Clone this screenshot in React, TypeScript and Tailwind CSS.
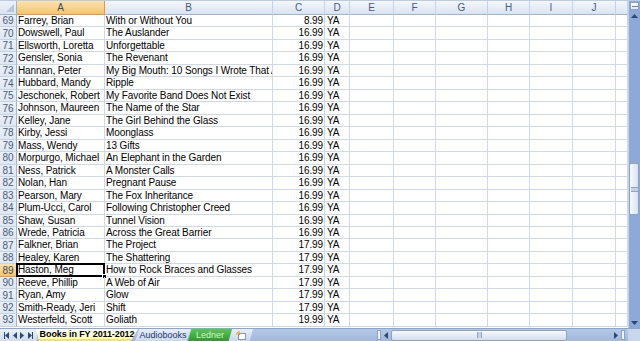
import React from "react";

const rows: [number, string, string, string][] = [
  [69, "Farrey, Brian", "With or Without You", "8.99"],
  [70, "Dowswell, Paul", "The Auslander", "16.99"],
  [71, "Ellsworth, Loretta", "Unforgettable", "16.99"],
  [72, "Gensler, Sonia", "The Revenant", "16.99"],
  [73, "Hannan, Peter", "My Big Mouth: 10 Songs I Wrote That Almost Got Me Expelled", "16.99"],
  [74, "Hubbard, Mandy", "Ripple", "16.99"],
  [75, "Jeschonek, Robert", "My Favorite Band Does Not Exist", "16.99"],
  [76, "Johnson, Maureen", "The Name of the Star", "16.99"],
  [77, "Kelley, Jane", "The Girl Behind the Glass", "16.99"],
  [78, "Kirby, Jessi", "Moonglass", "16.99"],
  [79, "Mass, Wendy", "13 Gifts", "16.99"],
  [80, "Morpurgo, Michael", "An Elephant in the Garden", "16.99"],
  [81, "Ness, Patrick", "A Monster Calls", "16.99"],
  [82, "Nolan, Han", "Pregnant Pause", "16.99"],
  [83, "Pearson, Mary", "The Fox Inheritance", "16.99"],
  [84, "Plum-Ucci, Carol", "Following Christopher Creed", "16.99"],
  [85, "Shaw, Susan", "Tunnel Vision", "16.99"],
  [86, "Wrede, Patricia", "Across the Great Barrier", "16.99"],
  [87, "Falkner, Brian", "The Project", "17.99"],
  [88, "Healey, Karen", "The Shattering", "17.99"],
  [89, "Haston, Meg", "How to Rock Braces and Glasses", "17.99"],
  [90, "Reeve, Phillip", "A Web of Air", "17.99"],
  [91, "Ryan, Amy", "Glow", "17.99"],
  [92, "Smith-Ready, Jeri", "Shift", "17.99"],
  [93, "Westerfeld, Scott", "Goliath", "19.99"],
];

const letters = ["A", "B", "C", "D", "E", "F", "G", "H", "I", "J", ""];

const cell =
  "border-r border-b border-[#d0d7e5] overflow-hidden whitespace-nowrap text-[10px] leading-[11.5px] tracking-[-0.1px] text-black";

function Tri({ dir, className = "" }: { dir: "up" | "down" | "left" | "right"; className?: string }) {
  const pts =
    dir === "up"
      ? "0,4 3.5,0 7,4"
      : dir === "down"
      ? "0,0 3.5,4 7,0"
      : dir === "left"
      ? "4,0 0,3.5 4,7"
      : "0,0 4,3.5 0,7";
  const w = dir === "up" || dir === "down" ? 7 : 4;
  const h = dir === "up" || dir === "down" ? 4 : 7;
  return (
    <svg width={w} height={h} viewBox={`0 0 ${w} ${h}`} className={className}>
      <polygon points={pts} fill="#2d4773" />
    </svg>
  );
}

export default function App() {
  return (
    <div
      className="w-[640px] h-[341px] overflow-hidden flex flex-col bg-white"
      style={{ fontFamily: '"Liberation Sans", Arial, sans-serif' }}
    >
      <div className="flex h-[328px] border-t border-[#b9cce6]">
        {/* grid */}
        <div className="grid grid-cols-[17px_88px_168px_52px_25px_44px_42px_52px_42px_43px_43px_12px] grid-rows-[14px_repeat(25,12.48px)] flex-1 overflow-hidden">
          {/* corner */}
          <div className="relative border-r border-b border-[#9eb6ce] bg-gradient-to-b from-[#eef3fa] to-[#d9e3f1]">
            <div className="absolute right-[2px] bottom-[2px] w-0 h-0 border-l-[8px] border-l-transparent border-b-[8px] border-b-[#b7c6da]" />
          </div>
          {letters.map((l, i) => (
            <div
              key={"h" + i}
              className={
                i === 0
                  ? "flex items-center justify-center border-r border-b border-[#f29536] bg-gradient-to-b from-[#fae2b2] to-[#f4c66c] text-[10px] text-[#3b4a63]"
                  : "flex items-center justify-center border-r border-b border-r-[#c5d3e6] border-b-[#9eb6ce] bg-gradient-to-b from-[#f4f7fc] to-[#d9e3f0] text-[10px] text-[#4a5b78]"
              }
            >
              {l}
            </div>
          ))}
          {rows.map(([n, a, b, c]) => {
            const sel = n === 89;
            return (
              <React.Fragment key={n}>
                <div
                  className={
                    sel
                      ? "flex items-center justify-center border-r border-b border-r-[#f29536] border-b-[#f29536] bg-gradient-to-b from-[#fae2b2] to-[#f4c66c] text-[10px] leading-[11px] text-[#3b4a63]"
                      : "flex items-center justify-center border-r border-b border-r-[#9eb6ce] border-b-[#c5d3e6] bg-gradient-to-b from-[#eaf0f8] to-[#dfe7f3] text-[10px] leading-[11px] text-[#4a5b78]"
                  }
                >
                  {n}
                </div>
                <div className={cell + " relative pl-[1px] overflow-visible"}>
                  <span className="block overflow-hidden">{a}</span>
                  {sel && (
                    <>
                      <div className="absolute left-[-1px] top-[-1px] right-[-1px] bottom-[-1px] border-2 border-black pointer-events-none" />
                      <div className="absolute right-[-3px] bottom-[-3px] w-[5px] h-[5px] bg-black border border-white" />
                    </>
                  )}
                </div>
                <div className={cell + " pl-[1px]"}>{b}</div>
                <div className={cell + " text-right pr-[1px]"}>{c}</div>
                <div className={cell + " pl-[2px]"}>YA</div>
                <div className={cell} />
                <div className={cell} />
                <div className={cell} />
                <div className={cell} />
                <div className={cell} />
                <div className={cell} />
                <div className={cell} />
              </React.Fragment>
            );
          })}
        </div>
        {/* vertical scrollbar */}
        <div className="w-[12px] flex flex-col bg-[#8ea9d6] border-l border-[#c2d3ec]">
          <div className="h-[8px] mx-[1px] mt-[1px] bg-gradient-to-b from-white to-[#dfe8f5] border border-[#8ea3c3] flex items-center justify-center">
            <div className="w-[6px] h-[1px] bg-[#6f85a8]" />
          </div>
          <div className="h-[11px] flex items-center justify-center">
            <Tri dir="up" />
          </div>
          <div className="flex-1 relative">
            <div className="absolute left-0 right-[1px] top-[142px] h-[52px] rounded-[2px] border border-[#8fa3c1] bg-gradient-to-r from-[#f6f9fd] to-[#d8e2ef] flex flex-col items-center justify-center">
              <div className="w-[7px] h-[5px] border-y border-[#8fa3c1] bg-[#c6d2e3]" />
            </div>
          </div>
          <div className="h-[11px] flex items-center justify-center">
            <Tri dir="down" />
          </div>
        </div>
      </div>
      {/* tab bar */}
      <div className="h-[13px] flex items-stretch bg-gradient-to-b from-[#b5c9e6] to-[#9fb8dd] border-t border-[#8aa6d0] text-[9px] leading-[12px] whitespace-nowrap">
        <div className="w-[37px] shrink-0 flex items-center justify-around px-[2px] bg-gradient-to-b from-[#eaf0f9] to-[#cfdcee]">
          <span className="flex items-center"><span className="w-[1px] h-[7px] bg-[#2d4773]" /><Tri dir="left" /></span>
          <Tri dir="left" />
          <Tri dir="right" />
          <span className="flex items-center"><Tri dir="right" /><span className="w-[1px] h-[7px] bg-[#2d4773]" /></span>
        </div>
        <div className="relative w-[102px] shrink-0 -ml-[1px] flex items-center justify-center font-bold tracking-[-0.1px] text-black bg-gradient-to-b from-white to-[#fff9c6] [clip-path:polygon(0_0,100%_0,93%_100%,3%_100%)] border-b-2 border-[#f5e26a]">
          Books in FY 2011-2012
        </div>
        <div className="w-[56px] shrink-0 -ml-[3px] flex items-center justify-center text-[#1e3767] bg-gradient-to-b from-[#e8eef8] to-[#c9d8ee] [clip-path:polygon(8%_0,100%_0,92%_100%,0_100%)]">
          Audiobooks
        </div>
        <div className="w-[44px] shrink-0 -ml-[3px] flex items-center justify-center text-[#d8f5c8] bg-gradient-to-b from-[#5cc45a] to-[#2e9a2c] [clip-path:polygon(8%_0,100%_0,92%_100%,0_100%)]">
          Ledner
        </div>
        <div className="w-[24px] shrink-0 -ml-[3px] flex items-center justify-center bg-gradient-to-b from-[#e8eef8] to-[#c9d8ee] [clip-path:polygon(14%_0,100%_0,86%_100%,0_100%)]">
          <svg width="10" height="9" viewBox="0 0 10 9">
            <rect x="2.5" y="2.5" width="7" height="6" fill="#fff" stroke="#8a96a8" />
            <path d="M1 1 L4 4 M0 3 H3 M3 0 V3" stroke="#e3a21a" strokeWidth="1" />
          </svg>
        </div>
        <div className="flex-1" />
        <div className="w-[251px] shrink-0 flex items-center">
          <div className="w-[4px] h-[10px] bg-[#eef3fa] border border-[#8ea3c3]" />
          <div className="w-[10px] flex items-center justify-center"><Tri dir="left" /></div>
          <div className="w-[176px] h-[11px] rounded-[2px] border border-[#8fa3c1] bg-gradient-to-b from-[#f6f9fd] to-[#d3deed] flex items-center justify-center">
            <div className="w-[5px] h-[6px] border-x border-[#8fa3c1] bg-[#c6d2e3]" />
          </div>
          <div className="flex-1" />
          <div className="w-[8px] flex items-center justify-center"><Tri dir="right" /></div>
          <div className="w-[4px] h-[10px] mr-[3px] ml-[1px] bg-[#eef3fa] border border-[#8ea3c3]" />
        </div>
        <div className="w-[12px] shrink-0 bg-[#c7d7ee]" />
      </div>
    </div>
  );
}
